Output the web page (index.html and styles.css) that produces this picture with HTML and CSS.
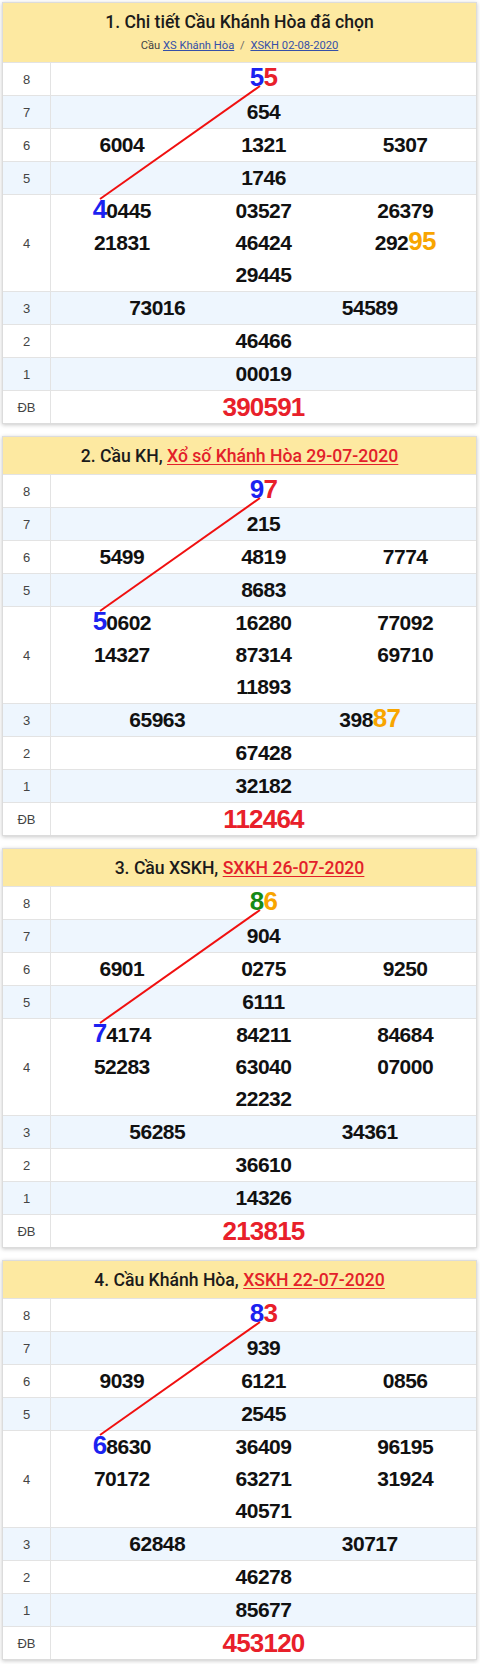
FILE: index.html
```html
<!DOCTYPE html>
<html lang="vi">
<head>
<meta charset="utf-8">
<title>Cầu Khánh Hòa</title>
<link rel="stylesheet" href="styles.css">
</head>
<body>
<div class="wrap">

<div class="card">
  <div class="head head-2">
    <h2 class="title">1. Chi tiết Cầu Khánh Hòa đã chọn</h2>
    <p class="sub">Cầu <a href="#">XS Khánh Hòa</a> <span class="sep">/</span> <a href="#">XSKH 02-08-2020</a></p>
  </div>
  <div class="body">
    <div class="row"><div class="lbl">8</div><div class="val"><span class="n c1"><b class="hl blue">5</b><b class="hl red">5</b></span></div></div>
    <div class="row alt"><div class="lbl">7</div><div class="val"><span class="n c1">654</span></div></div>
    <div class="row"><div class="lbl">6</div><div class="val"><span class="n c3">6004</span><span class="n c3">1321</span><span class="n c3">5307</span></div></div>
    <div class="row alt"><div class="lbl">5</div><div class="val"><span class="n c1">1746</span></div></div>
    <div class="row"><div class="lbl">4</div><div class="val"><span class="n c3"><b class="hl blue">4</b>0445</span><span class="n c3">03527</span><span class="n c3">26379</span><span class="n c3">21831</span><span class="n c3">46424</span><span class="n c3">292<b class="hl orange">95</b></span><span class="n c3">29445</span></div></div>
    <div class="row alt"><div class="lbl">3</div><div class="val"><span class="n c2">73016</span><span class="n c2">54589</span></div></div>
    <div class="row"><div class="lbl">2</div><div class="val"><span class="n c1">46466</span></div></div>
    <div class="row alt"><div class="lbl">1</div><div class="val"><span class="n c1">00019</span></div></div>
    <div class="row"><div class="lbl">ĐB</div><div class="val"><span class="n c1 db">390591</span></div></div>
    <svg class="link" viewBox="0 0 473 361" width="473" height="361"><line x1="257" y1="24" x2="97" y2="137"/></svg>
  </div>
</div>

<div class="card">
  <div class="head">
    <h2 class="title">2. Cầu KH, <a href="#" class="rlink">Xổ số Khánh Hòa 29-07-2020</a></h2>
  </div>
  <div class="body">
    <div class="row"><div class="lbl">8</div><div class="val"><span class="n c1"><b class="hl blue">9</b><b class="hl red">7</b></span></div></div>
    <div class="row alt"><div class="lbl">7</div><div class="val"><span class="n c1">215</span></div></div>
    <div class="row"><div class="lbl">6</div><div class="val"><span class="n c3">5499</span><span class="n c3">4819</span><span class="n c3">7774</span></div></div>
    <div class="row alt"><div class="lbl">5</div><div class="val"><span class="n c1">8683</span></div></div>
    <div class="row"><div class="lbl">4</div><div class="val"><span class="n c3"><b class="hl blue">5</b>0602</span><span class="n c3">16280</span><span class="n c3">77092</span><span class="n c3">14327</span><span class="n c3">87314</span><span class="n c3">69710</span><span class="n c3">11893</span></div></div>
    <div class="row alt"><div class="lbl">3</div><div class="val"><span class="n c2">65963</span><span class="n c2">398<b class="hl orange">87</b></span></div></div>
    <div class="row"><div class="lbl">2</div><div class="val"><span class="n c1">67428</span></div></div>
    <div class="row alt"><div class="lbl">1</div><div class="val"><span class="n c1">32182</span></div></div>
    <div class="row"><div class="lbl">ĐB</div><div class="val"><span class="n c1 db">112464</span></div></div>
    <svg class="link" viewBox="0 0 473 361" width="473" height="361"><line x1="257" y1="24" x2="97" y2="137"/></svg>
  </div>
</div>

<div class="card">
  <div class="head">
    <h2 class="title">3. Cầu XSKH, <a href="#" class="rlink">SXKH 26-07-2020</a></h2>
  </div>
  <div class="body">
    <div class="row"><div class="lbl">8</div><div class="val"><span class="n c1"><b class="hl green">8</b><b class="hl orange">6</b></span></div></div>
    <div class="row alt"><div class="lbl">7</div><div class="val"><span class="n c1">904</span></div></div>
    <div class="row"><div class="lbl">6</div><div class="val"><span class="n c3">6901</span><span class="n c3">0275</span><span class="n c3">9250</span></div></div>
    <div class="row alt"><div class="lbl">5</div><div class="val"><span class="n c1">6111</span></div></div>
    <div class="row"><div class="lbl">4</div><div class="val"><span class="n c3"><b class="hl blue">7</b>4174</span><span class="n c3">84211</span><span class="n c3">84684</span><span class="n c3">52283</span><span class="n c3">63040</span><span class="n c3">07000</span><span class="n c3">22232</span></div></div>
    <div class="row alt"><div class="lbl">3</div><div class="val"><span class="n c2">56285</span><span class="n c2">34361</span></div></div>
    <div class="row"><div class="lbl">2</div><div class="val"><span class="n c1">36610</span></div></div>
    <div class="row alt"><div class="lbl">1</div><div class="val"><span class="n c1">14326</span></div></div>
    <div class="row"><div class="lbl">ĐB</div><div class="val"><span class="n c1 db">213815</span></div></div>
    <svg class="link" viewBox="0 0 473 361" width="473" height="361"><line x1="257" y1="24" x2="97" y2="137"/></svg>
  </div>
</div>

<div class="card">
  <div class="head">
    <h2 class="title">4. Cầu Khánh Hòa, <a href="#" class="rlink">XSKH 22-07-2020</a></h2>
  </div>
  <div class="body">
    <div class="row"><div class="lbl">8</div><div class="val"><span class="n c1"><b class="hl blue">8</b><b class="hl red">3</b></span></div></div>
    <div class="row alt"><div class="lbl">7</div><div class="val"><span class="n c1">939</span></div></div>
    <div class="row"><div class="lbl">6</div><div class="val"><span class="n c3">9039</span><span class="n c3">6121</span><span class="n c3">0856</span></div></div>
    <div class="row alt"><div class="lbl">5</div><div class="val"><span class="n c1">2545</span></div></div>
    <div class="row"><div class="lbl">4</div><div class="val"><span class="n c3"><b class="hl blue">6</b>8630</span><span class="n c3">36409</span><span class="n c3">96195</span><span class="n c3">70172</span><span class="n c3">63271</span><span class="n c3">31924</span><span class="n c3">40571</span></div></div>
    <div class="row alt"><div class="lbl">3</div><div class="val"><span class="n c2">62848</span><span class="n c2">30717</span></div></div>
    <div class="row"><div class="lbl">2</div><div class="val"><span class="n c1">46278</span></div></div>
    <div class="row alt"><div class="lbl">1</div><div class="val"><span class="n c1">85677</span></div></div>
    <div class="row"><div class="lbl">ĐB</div><div class="val"><span class="n c1 db">453120</span></div></div>
    <svg class="link" viewBox="0 0 473 361" width="473" height="361"><line x1="257" y1="24" x2="97" y2="137"/></svg>
  </div>
</div>

</div>
</body>
</html>
```

FILE: styles.css
```css
html, body {
  margin: 0;
  padding: 0;
  background: #ffffff;
}

.wrap {
  padding: 2px 3px 0 2px;
  font-family: "Liberation Sans", Arial, sans-serif;
  color: #111;
}

.card {
  border: 1px solid #dcdcdc;
  box-shadow: 0 1px 4px rgba(0, 0, 0, 0.22);
  margin-bottom: 12px;
  background: #fff;
}

.head {
  background: #fde9a1;
  height: 37px;
  display: flex;
  flex-direction: column;
  justify-content: center;
  align-items: center;
}

.head-2 {
  height: 59px;
  justify-content: flex-start;
}

.title {
  margin: 0;
  font-family: Roboto, "Liberation Sans", sans-serif;
  font-weight: 500;
  font-size: 17.6px;
  line-height: 20px;
  color: #1b1b1b;
  white-space: nowrap;
}

.head-2 .title {
  margin-top: 9px;
}

.sub {
  margin: 7px 0 0 0;
  font-family: Roboto, "Liberation Sans", sans-serif;
  font-size: 11.2px;
  line-height: 14px;
  color: #444;
}

.sub a {
  color: #3550a8;
  text-decoration: underline;
}

.sub .sep {
  margin: 0 3px;
  color: #666;
}

.rlink {
  color: #e3212a;
  text-decoration: underline;
  text-underline-offset: 2px;
}

.body {
  position: relative;
}

.row {
  display: flex;
  border-top: 1px solid #e3e3e3;
  background: #fff;
}

.row.alt {
  background: #eef6fe;
}

.lbl {
  flex: 0 0 47px;
  border-right: 1px solid #e3e3e3;
  display: flex;
  align-items: center;
  justify-content: center;
  font-size: 13px;
  color: #444;
}

.val {
  flex: 1;
  display: flex;
  flex-wrap: wrap;
  justify-content: center;
}

.n {
  text-align: center;
  line-height: 32px;
  height: 32px;
  font-weight: bold;
  font-size: 21px;
  letter-spacing: -0.5px;
  color: #111;
}

.c1 { flex: 0 0 100%; }
.c2 { flex: 0 0 50%; }
.c3 { flex: 0 0 33.3333%; }

.hl {
  font-size: 26px;
  line-height: 1;
  letter-spacing: -0.8px;
}

.blue { color: #1b22f0; }
.red { color: #e8202a; }
.orange { color: #f8a500; }
.green { color: #168a16; }

.db {
  font-size: 26px;
  letter-spacing: -0.8px;
  color: #e8202a;
}

.link {
  position: absolute;
  left: 0;
  top: 0;
  pointer-events: none;
  overflow: visible;
}

.link line {
  stroke: #f01010;
  stroke-width: 2;
}
```
